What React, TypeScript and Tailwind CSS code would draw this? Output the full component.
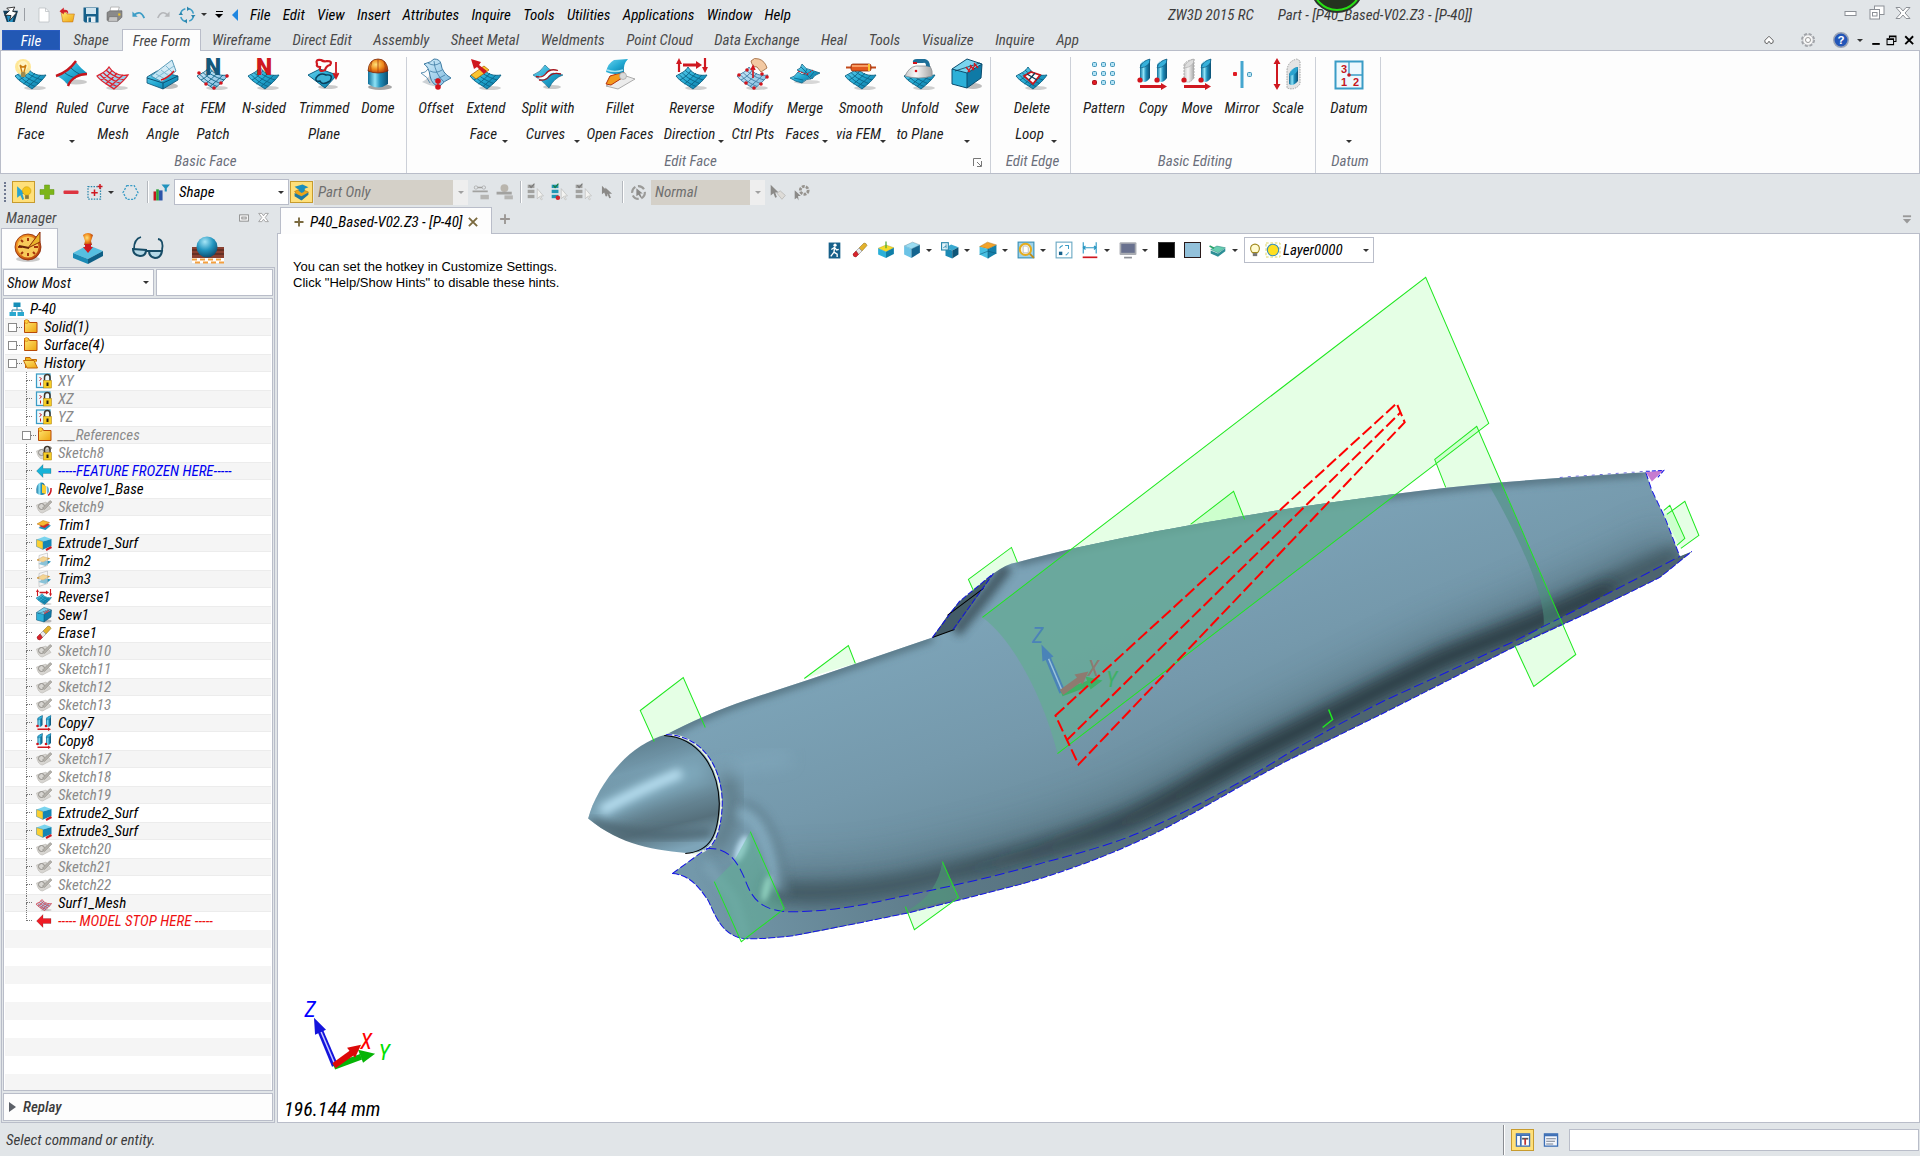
import React from 'react';
import clsx from 'clsx';

type IconProps = { className?: string };

const SURFACE = 'M0 18 C5 15 9 14 12 9 C17 17 24 18 31 17 C28 22 23 26 17 31 C12 27 4 24 0 18Z';
const SURFACE_GRID =
  'M3 16.5 C9 23 14 26 20 28.5 M6 14.5 C12 21 18 23 23.500 25.500 M9 12 C15 18 21 20 27 22 M15 12.500 C12 17 8 20 4 22 M20 15 C17 19 12 23 8.500 26 M26 17 C22 21 17 25 13 28.500';

function Svg({ size = 32, className, children }: { size?: number; className?: string; children: React.ReactNode }) {
  return (
    <svg width={size} height={size} viewBox="0 0 32 32" fill="none" className={clsx('shrink-0 overflow-visible', className)} aria-hidden="true">
      {children}
    </svg>
  );
}

function Defs() {
  return (
    <svg className="absolute h-0 w-0" aria-hidden="true">
      <defs>
        <linearGradient id="blue" x1="0" y1="0" x2="1" y2="1">
          <stop offset="0" stopColor="#6fd3ee" />
          <stop offset="0.5" stopColor="#22a9d2" />
          <stop offset="1" stopColor="#0d6f9b" />
        </linearGradient>
        <linearGradient id="pale" x1="0" y1="0" x2="1" y2="1">
          <stop offset="0" stopColor="#d4eefb" />
          <stop offset="1" stopColor="#79b7dd" />
        </linearGradient>
        <linearGradient id="tube" x1="0" y1="0" x2="1" y2="0">
          <stop offset="0" stopColor="#0d6f9b" />
          <stop offset="0.35" stopColor="#8fe3f7" />
          <stop offset="0.6" stopColor="#1f8fbb" />
          <stop offset="1" stopColor="#0b4f73" />
        </linearGradient>
        <linearGradient id="metal" x1="0" y1="0" x2="1" y2="0">
          <stop offset="0" stopColor="#c9c9c9" />
          <stop offset="0.4" stopColor="#f7f7f7" />
          <stop offset="1" stopColor="#a5a5a5" />
        </linearGradient>
        <linearGradient id="gold" x1="0" y1="0" x2="1" y2="1">
          <stop offset="0" stopColor="#ffe873" />
          <stop offset="1" stopColor="#eea410" />
        </linearGradient>
        <radialGradient id="orange" cx="0.4" cy="0.4" r="0.7">
          <stop offset="0" stopColor="#ffe27a" />
          <stop offset="0.5" stopColor="#f08a1c" />
          <stop offset="1" stopColor="#a32a0a" />
        </radialGradient>
        <radialGradient id="ball" cx="0.4" cy="0.25" r="0.8">
          <stop offset="0" stopColor="#a6e6f7" />
          <stop offset="0.5" stopColor="#2496c0" />
          <stop offset="1" stopColor="#0b4768" />
        </radialGradient>
      </defs>
    </svg>
  );
}

function Mesh({ fill = 'url(#blue)', line = '#0b6285', width = 0.9 }: { fill?: string; line?: string; width?: number }) {
  return (
    <>
      <ellipse cx="20" cy="30" rx="11" ry="2" fill="#000" opacity="0.18" />
      <path d={SURFACE} fill={fill} stroke={line} strokeWidth={width} />
      <path d={SURFACE_GRID} stroke={line} strokeWidth={width} />
    </>
  );
}

function Dots({ points }: { points: number[][] }) {
  return (
    <>
      {points.map(([x, y]) => (
        <circle key={`${x}-${y}`} cx={x} cy={y} r="1.800" fill="#d3141c" />
      ))}
    </>
  );
}

const BlendFace = () => (
  <Svg>
    <Mesh />
    <circle cx="8" cy="9" r="8" fill="#ffe690" opacity="0.95" />
    <circle cx="8" cy="8" r="5" fill="#fff3c0" />
    <path d="M5 7 L7 14 M11 7 L9 14 M5 7 Q8 11 11 7" stroke="#c97a0c" strokeWidth="1.300" />
    <rect x="6" y="14" width="4.500" height="5" rx="1" fill="#a08a4a" />
  </Svg>
);
const Ruled = () => (
  <Svg>
    <ellipse cx="20" cy="24" rx="11" ry="2.500" fill="#000" opacity="0.2" />
    <path d="M1 18 C10 15 15 10 20 4 C23 8 27 12 31 15 C24 16 16 20 12 27 C9 23 5 20 1 18Z" fill="url(#blue)" />
    <path d="M9 15 C13 18 16 19 20 20 M15 10 C19 14 23 16 26 17" stroke="#0b6285" />
    <path d="M0 18 C9 15 15 10 20 3 M31 16 C23 16 15 20 12 28" stroke="#c5161d" strokeWidth="2.400" />
  </Svg>
);
const CurveMesh = ({ size = 32 }: { size?: number }) => (
  <Svg size={size}>
    <Mesh fill="url(#pale)" line="#dc2430" width={1.3} />
  </Svg>
);
const FaceAtAngle = () => (
  <Svg>
    <ellipse cx="22" cy="28" rx="9" ry="3" fill="#000" opacity="0.25" />
    <path d="M0 19 L10 13 L31 18 L31 22 L16 31 L0 25Z" fill="url(#blue)" stroke="#0b4f73" strokeWidth="0.8" />
    <path d="M0 20 L16 25 L31 18 M16 25 V31" stroke="#0b4f73" />
    <path d="M4 18 L25 2 L29 13 L15 24Z" fill="#cfeaf6" opacity="0.9" stroke="#4a90b0" />
    <path d="M9 16 L18 21 M14 12 L22 18 M19 8 L26 15 M9 20 L27 8" stroke="#7db8d2" />
    <path d="M14 22 Q21 20 27 13" stroke="#d3141c" strokeWidth="1.500" />
  </Svg>
);
function NIcon({ color, dots }: { color: string; dots?: boolean }) {
  return (
    <Svg>
      <Mesh fill={dots ? 'url(#pale)' : 'url(#blue)'} />
      <text x="16" y="17" textAnchor="middle" fontFamily="Roboto, sans-serif" fontWeight="900" fontStyle="normal" fontSize="23" fill={color}>
        N
      </text>
      {dots && <Dots points={[[2, 15], [30, 18], [9, 26], [24, 25], [17, 30]]} />}
    </Svg>
  );
}
const TrimmedPlane = () => (
  <Svg>
    <ellipse cx="20" cy="29" rx="10" ry="2" fill="#000" opacity="0.2" />
    <path d="M0 17 L12 11 L29 17 L17 30Z" fill="url(#blue)" stroke="#0b6285" />
    <path d="M8 20 Q12 14 18 17 Q26 16 22 23 Q14 28 12 23 Q7 24 8 20Z" stroke="#083f5c" strokeWidth="1.500" fill="#3fb3d6" />
    <path d="M9 6 Q7 1 13 2 Q16 4 19 3 Q25 3 22 7 Q18 8 17 12 Q11 15 12 9 Q8 9 9 6Z" stroke="#cf1820" strokeWidth="2.200" />
    <path d="M28 4 V18 M25.500 15 L28 20 L30.500 15" stroke="#cf1820" strokeWidth="1.800" />
  </Svg>
);
const Dome = () => (
  <Svg>
    <ellipse cx="18" cy="29" rx="12" ry="3" fill="#000" opacity="0.35" />
    <path d="M6 12 V26 Q16 33 26 26 V12Z" fill="url(#tube)" />
    <path d="M6 13 Q7 1 16 1 Q25 1 26 13 Q16 17 6 13Z" fill="url(#orange)" stroke="#7b2a0a" strokeWidth="0.800" />
    <path d="M16 1 V15 M10 3 Q8 8 9 14 M22 3 Q24 8 23 14" stroke="#a33d0c" strokeWidth="0.800" />
  </Svg>
);
const OffsetIcon = () => (
  <Svg>
    <path d="M2 24 Q10 20 12 12 Q20 20 30 18 Q24 24 17 29 Q10 28 2 24Z" fill="#bfc6cb" opacity="0.8" />
    <path d="M4 6 Q12 4 14 1 Q20 1 21 6 Q22 15 31 20 Q24 23 20 28 Q12 28 10 18 Q9 9 4 6Z" fill="url(#pale)" stroke="#3d7ba3" />
    <path d="M1 15 Q6 15 8 11 M1 15 Q8 19 10 25 M8 5 Q14 9 20 5 M10 13 Q16 16 22 12 M14 22 Q20 20 25 17 M14 3 Q15 16 24 24" stroke="#3d7ba3" strokeWidth="0.800" />
    <path d="M18 23 V29" stroke="#d3141c" />
    <circle cx="18" cy="23" r="2.800" fill="#d3141c" />
    <circle cx="18" cy="29" r="2.800" fill="#d3141c" />
  </Svg>
);
const Extend = () => (
  <Svg>
    <Mesh />
    <path d="M1 17 L14 8 L19 12 L6 21Z" fill="#fbc531" stroke="#b56a08" strokeWidth="0.800" />
    <path d="M14 16 L7 9 L4 11 L1 1 L11 4 L9 7 L17 13Z" fill="#cf1820" />
  </Svg>
);
const Split = () => (
  <Svg>
    <ellipse cx="20" cy="29" rx="9" ry="2" fill="#000" opacity="0.2" />
    <path d="M1 17 Q9 14 13 7 Q20 15 31 17 Q22 20 17 30 Q10 22 1 17Z" fill="url(#blue)" stroke="#0b6285" strokeWidth="0.600" />
    <path d="M7 19 Q12 21 15 17 Q19 11 25 14" stroke="#fff" strokeWidth="3.500" />
    <path d="M4 18.500 Q11 20 14 15.500 Q18 10 26 12.500 M7 22 Q14 23 17 18.500 Q21 14 29 16" stroke="#a5161d" strokeWidth="1.300" />
  </Svg>
);
const Fillet = () => (
  <Svg>
    <path d="M2 28 L22 18 L31 21 L14 31Z" fill="#ececec" stroke="#999" strokeWidth="0.800" />
    <path d="M2 26 L6 18 L20 14 L18 20 L7 27Z" fill="#f39a1d" stroke="#b8300c" />
    <path d="M2 14 Q4 5 10 2 L24 1 Q19 6 20 14 Q11 18 2 14Z" fill="url(#blue)" />
    <path d="M3 12 Q11 15 19 12" stroke="#a7e5f5" strokeWidth="1.500" />
    <circle cx="19" cy="18" r="3.500" fill="#d9d9d9" stroke="#999" strokeWidth="0.600" />
  </Svg>
);
const Reverse = ({ size = 32 }: { size?: number }) => (
  <Svg size={size}>
    <Mesh />
    <path d="M3 14 V3 M29 0 V11" stroke="#cf1820" strokeWidth="2.200" />
    <path d="M0 6 L3 0 L6 6Z M26 9 L29 15 L32 9Z M20 3 L26 7 L20 11Z M7 5.500 H21 V8.500 H7Z" fill="#cf1820" />
  </Svg>
);
const Modify = () => (
  <Svg>
    <Mesh fill="url(#pale)" line="#3d7ba3" />
    <path d="M14 3 Q17 -1 22 1 Q28 3 30 10 L24 14 L20 9 Q15 9 14 3Z" fill="#f3c9a2" stroke="#9a6339" strokeWidth="0.800" />
    <path d="M16 20 V9 M14 12 L16 8 L18 12" stroke="#d3141c" strokeWidth="1.600" />
    <Dots points={[[2, 17], [10, 12], [30, 19], [9, 25], [24, 26], [17, 30], [25, 16]]} />
  </Svg>
);
const Merge = () => (
  <Svg>
    <ellipse cx="18" cy="24" rx="13" ry="2" fill="#000" opacity="0.15" />
    <path d="M1 20 Q6 19 9 14 Q12 17 18 17 L22 21 Q18 20 13 25 Q7 24 1 20Z" fill="url(#blue)" stroke="#0b6285" strokeWidth="0.800" />
    <path d="M8 12 Q12 11 13 6 Q17 12 22 12 L31 15 Q25 17 23 21 Q18 16 8 12Z" fill="url(#blue)" stroke="#0b6285" strokeWidth="0.800" />
    <path d="M5 20 L14 22 M12 9 L18 15 M18 11 L15 17 M25 14 L21 19" stroke="#0b6285" strokeWidth="0.800" />
    <path d="M9 13 L20 17 M18 16 L24 12" stroke="#d3141c" strokeDasharray="2 1" />
  </Svg>
);
const Smooth = () => (
  <Svg>
    <Mesh />
    <path d="M1 9.500 H31" stroke="#c2491a" strokeWidth="2" />
    <rect x="6" y="6" width="20" height="7" rx="2" fill="#e2581d" stroke="#8f2c08" strokeWidth="0.800" />
    <path d="M7 8 H25" stroke="#ffb27a" strokeWidth="1.500" />
    <path d="M24 6 V13" stroke="#fbc531" strokeWidth="2" />
  </Svg>
);
const Unfold = () => (
  <Svg>
    <Mesh />
    <path d="M1 18 Q5 9 12 8 L26 8 Q29 13 28 18 Q15 22 1 18Z" fill="url(#metal)" stroke="#8a8f94" strokeWidth="0.800" />
    <path d="M9 5 Q8 1 13 1 H21 Q26 2 26 9 L22 8 Q22 4 19 5Z" fill="#1e6f98" />
    <path d="M9 5 H13" stroke="#d3141c" strokeWidth="2" />
    <circle cx="12" cy="13" r="1.300" fill="#d3141c" />
  </Svg>
);
const Sew = ({ size = 32 }: { size?: number }) => (
  <Svg size={size}>
    <ellipse cx="22" cy="28" rx="9" ry="3" fill="#000" opacity="0.25" />
    <path d="M1 11 L16 1 L31 6 L16 15Z" fill="#7ad4ee" />
    <path d="M1 11 L16 15 V30 L1 26Z" fill="#2cb0d8" />
    <path d="M16 15 L31 6 L30 20 L16 30Z" fill="#0f7aa6" />
    <path d="M1 11 L16 15 L31 6 L16 1Z M16 15 V30 L1 26 V11 M16 30 L30 20 L31 6" stroke="#0a4c6e" strokeWidth="1" />
    <path d="M4 13 L29 5" stroke="#0a3d58" strokeWidth="0.800" />
    <path d="M15 9 L19 14 M19 7 L23 12 M23 5 L27 10 M17 14 L20 9 M21 12 L24 7" stroke="#d3141c" strokeWidth="1.300" />
  </Svg>
);
const DeleteLoop = () => (
  <Svg>
    <Mesh />
    <path d="M8 18 L15 14 L24 17 L17 26Z" fill="#fff" stroke="#c5161d" strokeWidth="1.800" />
    <path d="M11 16 L21 22 M19 15 L13 22" stroke="#0b3d58" strokeWidth="1.300" />
  </Svg>
);
const Pattern = () => (
  <Svg>
    {[4, 13, 22].flatMap((y) =>
      [4, 13, 22].map((x) => {
        const seed = x === 4 && y === 22;
        return (
          <rect key={`${x}-${y}`} x={x + 0.500} y={y + 0.500} width="4" height="4" rx="1" fill={seed ? '#e01b24' : '#b5e3f5'} stroke={seed ? '#a81018' : '#3f94b8'} />
        );
      })
    )}
  </Svg>
);
function Tube({ x, ghost }: { x: number; ghost?: boolean }) {
  return (
    <g transform={`translate(${x} 0)`}>
      <path d="M0 7 Q1 3 10 1 V20 Q5 27 0 22Z" fill={ghost ? 'url(#metal)' : 'url(#tube)'} stroke={ghost ? '#aaa' : 'none'} strokeDasharray="2 1" />
      <path d="M0 10 Q2 3 10 1 Q10 9 0 10Z" fill={ghost ? '#ddd' : '#35b0da'} stroke={ghost ? '#aaa' : '#0b4f73'} strokeWidth="0.600" />
    </g>
  );
}
function CopyMove({ size = 32, ghost }: { size?: number; ghost?: boolean }) {
  return (
    <Svg size={size}>
      <Tube x={3} ghost={ghost} />
      <Tube x={20} />
      <circle cx="3" cy="22" r="2.600" fill="#d3141c" />
      <circle cx="20" cy="22" r="2.600" fill="#d3141c" />
      <path d="M3 27 H24 V25 L30 28.500 L24 32 V30 H3Z" fill="#cf1820" />
    </Svg>
  );
}
const Mirror = () => (
  <Svg>
    <rect x="14.500" y="3" width="3" height="27" fill="#45a6cf" />
    <rect x="7" y="14" width="4" height="4" rx="1" fill="#e01b24" />
    <rect x="21.500" y="14.500" width="4" height="4" rx="1" fill="#b5e3f5" stroke="#3f94b8" />
  </Svg>
);
const Scale = () => (
  <Svg>
    <path d="M15 12 Q16 3 25 1 L28 3 V26 Q23 33 15 30Z" fill="#e4e4e4" stroke="#a0a0a0" strokeDasharray="1.500 1" />
    <path d="M17 16 Q19 10 26 9 V23 Q21 29 17 26Z" fill="url(#tube)" />
    <path d="M17 18 Q19 10 26 9 Q26 17 17 18Z" fill="#2aa3cf" />
    <path d="M5 5 V27" stroke="#cf1820" strokeWidth="2" />
    <path d="M1.500 6 L5 0 L8.500 6Z M1.500 26 L5 32 L8.500 26Z" fill="#cf1820" />
  </Svg>
);
const Datum = ({ size = 32 }: { size?: number }) => (
  <Svg size={size}>
    <rect x="2.500" y="3.500" width="27" height="27" fill="#eef8fd" stroke="#3a9cc6" strokeWidth="2" />
    <path d="M16 4 V17 H30" stroke="#3a9cc6" strokeWidth="1.300" />
    <circle cx="16" cy="17" r="1.800" fill="#c5161d" />
    <g fontFamily="Liberation Sans, sans-serif" fontWeight="700" fontStyle="normal" fontSize="11" fill="#c5161d" textAnchor="middle">
      <text x="11" y="15">3</text>
      <text x="11" y="28">1</text>
      <text x="23" y="28">2</text>
    </g>
  </Svg>
);

function Cube({ size = 18, top = '#7ad4ee', left = '#2cb0d8', right = '#0f6f99' }: { size?: number; top?: string; left?: string; right?: string }) {
  return (
    <Svg size={size}>
      <path d="M2 9 L17 2 L30 7 L15 14Z" fill={top} stroke="#3a6d82" strokeWidth="0.600" />
      <path d="M2 9 L15 14 V30 L2 24Z" fill={left} />
      <path d="M15 14 L30 7 V21 L15 30Z" fill={right} />
    </Svg>
  );
}

const Eraser = ({ size = 16 }: { size?: number }) => (
  <Svg size={size}>
    <path d="M14 12 L24 2 Q29 2 30 7 L20 18Z" fill="#e3b22c" stroke="#8c6a12" />
    <path d="M8 18 L14 12 L20 18 L13 25Z" fill="#e9e9e9" stroke="#777" />
    <path d="M2 24 L8 18 L13 25 L8 30 Q2 30 2 24Z" fill="#d8232b" stroke="#8c1016" />
  </Svg>
);
const Folder = ({ open }: { open?: boolean }) => (
  <Svg size={16}>
    {open ? (
      <>
        <path d="M5 26 V5 H14 L17 9 H27 V13" fill="#f0b51c" stroke="#c2680a" strokeWidth="2" />
        <path d="M1 11 H22 L29 26 H8Z" fill="url(#gold)" stroke="#c2680a" strokeWidth="2" />
      </>
    ) : (
      <>
        <path d="M3 27 V3 H11 L13 7 H28 V27Z" fill="url(#gold)" stroke="#b84a08" strokeWidth="2" />
        <circle cx="7" cy="5" r="4" fill="#ffce3a" stroke="#c2680a" />
      </>
    )}
  </Svg>
);
const Lock = () => (
  <>
    <path d="M17 15 V9 Q17 3 22.500 3 Q28 3 28 9 V15" stroke="#3d352c" strokeWidth="3" />
    <rect x="15" y="15" width="16" height="15" fill="#f6cd25" stroke="#a8790b" />
    <path d="M23 19 V26" stroke="#2b2110" strokeWidth="4" />
  </>
);
const DatumLock = () => (
  <Svg size={16}>
    <rect x="1" y="2" width="27" height="27" fill="#eef8fd" stroke="#3a9cc6" strokeWidth="2.500" />
    <path d="M7 8 L11 12 L7 15 M9 19 V25" stroke="#c5161d" strokeWidth="2" />
    <Lock />
  </Svg>
);
const SketchIcon = ({ locked }: { locked?: boolean }) => (
  <Svg size={16}>
    <path d="M1 12 L20 6 L30 19 L13 28Q4 28 1 12Z" fill="#d7d5d1" stroke="#b1aea8" />
    <circle cx="11" cy="15" r="6" stroke="#8f8c87" strokeWidth="2" />
    <path d="M13 18 L28 3 L32 6 L17 21Z" fill="#b3b0aa" stroke="#8f8c87" />
    {locked && <Lock />}
  </Svg>
);
const ArrowLeft = ({ color }: { color: string }) => (
  <Svg size={16}>
    <path d="M1 16 L14 3 V11 H30 V21 H14 V29Z" fill={color} stroke="#00000055" />
  </Svg>
);
const RootIcon = () => (
  <Svg size={16}>
    <path d="M16 10 V18 M6 24 V18 H26 V24" stroke="#2b7c9e" strokeWidth="2" />
    <rect x="9" y="3" width="14" height="9" fill="#178fb8" />
    <rect x="1" y="22" width="13" height="8" fill="#2aa8cf" />
    <rect x="17" y="22" width="13" height="8" fill="#2aa8cf" />
  </Svg>
);
const Revolve = () => (
  <Svg size={16}>
    <path d="M1 24 Q-1 6 9 3 Q18 2 18 12 V26 Q8 31 1 24Z" fill="url(#tube)" />
    <path d="M12 6 L20 10 V26 L12 24Z" fill="#fbd033" />
    <path d="M21 10 Q27 12 26 22 L22 27Z" fill="#6fb3d2" />
    <path d="M30 14 Q31 24 24 29" stroke="#cf1820" strokeWidth="3" />
  </Svg>
);
const Trim = ({ pale }: { pale?: boolean }) => (
  <Svg size={16}>
    <path d="M5 22 L16 14 L30 17 L19 26Z" fill="#2193bd" />
    {!pale && <path d="M6 18 L18 12 L28 14 L17 22Z" fill="#d3242b" />}
    <path d="M2 14 L14 7 L27 11 L14 18Z" fill="#f7b932" stroke="#b56a08" />
    {pale && <path d="M6 5 L23 0 V25 L6 31Z" fill="#f4f4f4" fillOpacity="0.5" stroke="#a8a8a8" />}
  </Svg>
);
const ExtrudeIcon = () => (
  <Svg size={16}>
    <path d="M1 9 L17 3 L31 8 L14 13Z" fill="#7ad4ee" />
    <path d="M1 9 L14 13 V29 L1 23Z" fill="#fbd033" stroke="#3a7d98" />
    <path d="M14 13 L31 8 V22 L14 29Z" fill="#1485b3" />
    <path d="M20 30 L31 24" stroke="#cf1820" strokeWidth="4" />
  </Svg>
);

function Caret({ className }: IconProps) {
  return <span className={clsx('inline-block shrink-0 border-x-[3px] border-t-[3px] border-x-transparent border-t-[#333]', className)} />;
}

const MENUS = ['File', 'Edit', 'View', 'Insert', 'Attributes', 'Inquire', 'Tools', 'Utilities', 'Applications', 'Window', 'Help'];

const TABS = [
  'Wireframe', 'Direct Edit', 'Assembly', 'Sheet Metal', 'Weldments', 'Point Cloud', 'Data Exchange',
  'Heal', 'Tools', 'Visualize', 'Inquire', 'App',
];

type Command = { lines: string[]; icon: React.ReactNode; width: string; menu?: boolean };
type Group = { name: string; width: string; pad: string; launcher?: boolean; commands: Command[] };

const GROUPS: Group[] = [
  {
    name: 'Basic Face',
    width: 'w-[406px]',
    pad: 'pl-2',
    commands: [
      { lines: ['Blend', 'Face'], icon: <BlendFace />, width: 'w-11' },
      { lines: ['Ruled'], icon: <Ruled />, width: 'w-[38px]', menu: true },
      { lines: ['Curve', 'Mesh'], icon: <CurveMesh />, width: 'w-11' },
      { lines: ['Face at', 'Angle'], icon: <FaceAtAngle />, width: 'w-14' },
      { lines: ['FEM', 'Patch'], icon: <NIcon color="#14587a" dots />, width: 'w-11' },
      { lines: ['N-sided'], icon: <NIcon color="#cf1820" />, width: 'w-[58px]' },
      { lines: ['Trimmed', 'Plane'], icon: <TrimmedPlane />, width: 'w-[62px]' },
      { lines: ['Dome'], icon: <Dome />, width: 'w-[46px]' },
    ],
  },
  {
    name: 'Edit Face',
    width: 'w-[584px]',
    pad: 'pl-[5px]',
    launcher: true,
    commands: [
      { lines: ['Offset'], icon: <OffsetIcon />, width: 'w-12' },
      { lines: ['Extend', 'Face'], icon: <Extend />, width: 'w-[52px]', menu: true },
      { lines: ['Split with', 'Curves'], icon: <Split />, width: 'w-[72px]', menu: true },
      { lines: ['Fillet', 'Open Faces'], icon: <Fillet />, width: 'w-[72px]' },
      { lines: ['Reverse', 'Direction'], icon: <Reverse />, width: 'w-[72px]', menu: true },
      { lines: ['Modify', 'Ctrl Pts'], icon: <Modify />, width: 'w-[50px]' },
      { lines: ['Merge', 'Faces'], icon: <Merge />, width: 'w-[54px]', menu: true },
      { lines: ['Smooth', 'via FEM'], icon: <Smooth />, width: 'w-[58px]', menu: true },
      { lines: ['Unfold', 'to Plane'], icon: <Unfold />, width: 'w-[60px]' },
      { lines: ['Sew'], icon: <Sew />, width: 'w-[34px]', menu: true },
    ],
  },
  {
    name: 'Edit Edge',
    width: 'w-20',
    pad: 'pl-3',
    commands: [{ lines: ['Delete', 'Loop'], icon: <DeleteLoop />, width: 'w-[58px]', menu: true }],
  },
  {
    name: 'Basic Editing',
    width: 'w-[245px]',
    pad: 'pl-[6px]',
    commands: [
      { lines: ['Pattern'], icon: <Pattern />, width: 'w-[54px]' },
      { lines: ['Copy'], icon: <CopyMove />, width: 'w-11' },
      { lines: ['Move'], icon: <CopyMove ghost />, width: 'w-11' },
      { lines: ['Mirror'], icon: <Mirror />, width: 'w-[46px]' },
      { lines: ['Scale'], icon: <Scale />, width: 'w-[46px]' },
    ],
  },
  {
    name: 'Datum',
    width: 'w-[65px]',
    pad: 'pl-2',
    commands: [{ lines: ['Datum'], icon: <Datum />, width: 'w-[50px]', menu: true }],
  },
];

function QuickAccess() {
  return (
    <div className="flex items-center pl-[2px]">
      <Svg size={17}>
        <path d="M2 9 L30 9 L24 30 H9Z" fill="#123f5c" />
        <path d="M8 14 L24 10 L20 30 H12Z" fill="#2793c4" />
        <path d="M9 4 L24 2 L20 10 L28 12 L14 28 L17 18 L5 17 L14 9Z" fill="#fff" stroke="#111" strokeWidth="1.500" />
      </Svg>
      <span className="ml-[5px] h-[13px] w-px bg-[#9a9ea4]" />
      <button type="button" aria-label="New" className="ml-[10px] grid w-[17px] place-items-center">
        <Svg size={16}>
          <path d="M6 2 H19 L26 9 V30 H6Z" fill="#fff" stroke="#b9bdc2" strokeWidth="1.500" />
          <path d="M19 2 V9 H26" stroke="#b9bdc2" strokeWidth="1.500" />
        </Svg>
      </button>
      <button type="button" aria-label="Open" className="ml-[7px] grid w-[17px] place-items-center">
        <Svg size={17}>
          <path d="M4 12 H13 L15 15 H29 L26 30 H7Z" fill="url(#gold)" stroke="#c2680a" />
          <path d="M1 10 L9 3 V7 Q19 6 17 15 Q15 10 9 12 V16Z" fill="#d3242b" />
        </Svg>
      </button>
      <button type="button" aria-label="Save" className="ml-[6px] grid w-[17px] place-items-center">
        <Svg size={16}>
          <path d="M1 1 H31 V31 H4 L1 28Z" fill="#17608a" />
          <rect x="6" y="2" width="20" height="12" fill="#cfe3ee" />
          <rect x="8" y="19" width="17" height="12" fill="#e7f0f5" />
          <rect x="11" y="21" width="5" height="9" fill="#17608a" />
        </Svg>
      </button>
      <button type="button" aria-label="Print" className="ml-[7px] grid w-[17px] place-items-center">
        <Svg size={17}>
          <path d="M9 2 L25 2 L22 12 H7Z" fill="#fff" stroke="#888" />
          <path d="M2 12 L8 9 H30 V21 L24 27 H2Z" fill="#8a8a8a" stroke="#555" />
          <path d="M6 20 H22 V29 H4Z" fill="#c4c4c4" stroke="#666" />
          <rect x="23" y="14" width="4" height="4" fill="#f0c423" />
        </Svg>
      </button>
      <button type="button" aria-label="Undo" className="ml-[7px] grid w-[17px] place-items-center">
        <Svg size={14}>
          <path d="M6 15 Q20 4 28 23" stroke="#3d9dc6" strokeWidth="4" />
          <path d="M1 8 V20 H13Z" fill="#3d9dc6" />
        </Svg>
      </button>
      <button type="button" aria-label="Redo" className="ml-[7px] grid w-[17px] place-items-center">
        <Svg size={14}>
          <path d="M26 15 Q12 4 4 23" stroke="#b4b6b9" strokeWidth="3.500" />
          <path d="M31 8 V20 H19Z" fill="#b4b6b9" />
        </Svg>
      </button>
      <button type="button" aria-label="Regenerate" className="ml-[7px] grid w-[18px] place-items-center">
        <Svg size={16}>
          <circle cx="16" cy="16" r="13" stroke="#3d9dc6" strokeWidth="3" strokeDasharray="15.400 5" />
          <path d="M16 -1 L22 4 L16 8Z M33 16 L28 22 L24 16Z M16 33 L10 28 L16 24Z M-1 16 L4 10 L8 16Z" fill="#2d86ad" />
        </Svg>
      </button>
      <Caret className="ml-[5px]" />
      <span className="ml-2 flex flex-col items-center gap-[2px]">
        <span className="h-px w-[7px] bg-black" />
        <span className="border-x-[4px] border-t-[4px] border-x-transparent border-t-black" />
      </span>
      <span className="ml-[9px] border-y-[6px] border-r-[6px] border-y-transparent border-r-[#1f86e0]" />
    </div>
  );
}

function WindowButtons() {
  return (
    <div className="flex items-center gap-[10px] pr-[9px] pb-1 text-[#8c9096]">
      <button type="button" aria-label="Minimize"><Svg size={16}><rect x="4" y="13" width="22" height="8" fill="#fff" stroke="currentColor" strokeWidth="2" /></Svg></button>
      <button type="button" aria-label="Restore">
        <Svg size={16}>
          <rect x="11" y="2" width="19" height="17" fill="#fff" stroke="currentColor" strokeWidth="2" />
          <rect x="2" y="9" width="19" height="19" fill="#fff" stroke="currentColor" strokeWidth="2" />
          <rect x="7" y="15" width="9" height="7" stroke="currentColor" strokeWidth="2" />
        </Svg>
      </button>
      <button type="button" aria-label="Close">
        <Svg size={16}>
          <path d="M2 5 H10 L16 12 L22 5 H30 L20 16 L30 27 H22 L16 20 L10 27 H2 L12 16Z" fill="#fff" stroke="currentColor" strokeWidth="2" />
        </Svg>
      </button>
    </div>
  );
}

function TitleBar() {
  return (
    <header className="relative flex h-[29px] items-center overflow-hidden">
      <QuickAccess />
      <nav className="ml-[6px] flex w-[553px] justify-between text-black">
        {MENUS.map((m) => (
          <button type="button" key={m} className="px-[6px] italic">{m}</button>
        ))}
      </nav>
      <div className="flex flex-1 justify-center gap-6 text-[#3c3c3c]">
        <span>ZW3D 2015 RC</span>
        <span>Part - [P40_Based-V02.Z3 - [P-40]]</span>
      </div>
      <WindowButtons />
      <svg className="absolute top-0 right-[556px]" width="54" height="15" viewBox="0 0 54 15" aria-hidden="true">
        <circle cx="27" cy="-14" r="27" fill="#2d332d" />
        <circle cx="27" cy="-14" r="24" fill="#24321f" stroke="#27df14" strokeWidth="2" />
      </svg>
    </header>
  );
}

function RibbonTabs() {
  return (
    <div className="relative z-10 -mb-px flex h-[22px] items-stretch pl-[2px] text-[#4a4a4a]">
      <button type="button" className="mt-px mb-px w-[58px] border border-[#2a5cc0] bg-[#2258b4] italic text-white">File</button>
      <button type="button" className="w-[62px] italic">Shape</button>
      <button type="button" className="w-[79px] border border-b-0 border-[#b9bdc9] bg-[#fdfdfd] italic">Free Form</button>
      <nav className="flex w-[888px] justify-between pl-px">
        {TABS.map((t) => (
          <button type="button" key={t} className="px-[10px] italic">{t}</button>
        ))}
      </nav>
      <div className="ml-auto flex items-center pr-[5px]">
        <button type="button" aria-label="Collapse ribbon">
          <Svg size={10}><path d="M3 17 L16 4 L29 17 V24 L22 28 L16 20 L10 28 L3 24Z" fill="#fff" stroke="#555" strokeWidth="3" /></Svg>
        </button>
        <button type="button" aria-label="Options" className="ml-[26px]">
          <Svg size={16}>
            <circle cx="16" cy="16" r="12" fill="#f2f2f2" stroke="#a0a3a8" strokeWidth="4" strokeDasharray="6 3.400" />
            <circle cx="16" cy="16" r="10.500" fill="#f6f6f6" stroke="#a8abb0" strokeWidth="1.500" />
            <circle cx="16" cy="16" r="5" fill="#fff" stroke="#999" strokeWidth="2" />
          </Svg>
        </button>
        <button type="button" aria-label="Help" className="ml-[17px]">
          <Svg size={16}>
            <circle cx="16" cy="16" r="14.500" fill="#2356b8" stroke="#9aa3b5" strokeWidth="3" />
            <text x="16" y="24" textAnchor="middle" fontFamily="Liberation Sans, sans-serif" fontStyle="normal" fontWeight="700" fontSize="23" fill="#fff">?</text>
          </Svg>
        </button>
        <Caret className="ml-2" />
        <button type="button" aria-label="Minimize document" className="ml-[7px]">
          <Svg size={12}><rect x="6" y="24" width="20" height="5" fill="#000" /></Svg>
        </button>
        <button type="button" aria-label="Restore document" className="ml-1">
          <Svg size={11}><path d="M10 9 V3 H29 V19 H22 M3 11 H22 V28 H3Z M3 13 H22 M10 5 H29" stroke="#000" strokeWidth="3" /></Svg>
        </button>
        <button type="button" aria-label="Close document" className="ml-[6px]">
          <Svg size={12}><path d="M6 6 L27 27 M27 6 L6 27" stroke="#000" strokeWidth="5" /></Svg>
        </button>
      </div>
    </div>
  );
}

function RibbonCommand({ lines, icon, width, menu }: Command) {
  return (
    <button type="button" className={clsx('relative flex shrink-0 flex-col items-center italic', width)}>
      {icon}
      <span className="mt-[5px] leading-[26px] whitespace-nowrap">{lines[0]}</span>
      {lines[1] && <span className={clsx('leading-[26px] whitespace-nowrap', menu && 'pr-[5px]')}>{lines[1]}</span>}
      {menu && <Caret className={clsx('absolute top-[82px]', lines[1] ? 'right-1' : 'self-center')} />}
    </button>
  );
}

function Ribbon() {
  return (
    <div className="flex h-[124px] border border-[#b9bdc9] bg-[#fdfdfd] text-[#1c1c1c]">
      {GROUPS.map((g) => (
        <section key={g.name} aria-label={g.name} className={clsx('relative mt-[6px] flex shrink-0 flex-col border-r border-[#ccd0d8]', g.width)}>
          <div className={clsx('flex h-[92px] items-start pt-px', g.pad)}>
            {g.commands.map((c) => (
              <RibbonCommand key={c.lines.join(' ')} {...c} />
            ))}
          </div>
          <h2 className={clsx('text-center leading-6 text-[#6b6f7b]', g.launcher ? 'pr-4' : 'pl-1')}>{g.name}</h2>
          {g.launcher && (
            <svg className="absolute right-2 bottom-[6px]" width="9" height="9" viewBox="0 0 9 9" aria-hidden="true">
              <path d="M0.500 8 V0.500 H8 M4 4 L8 8 M8.500 3 V8.500 H4" stroke="#777" fill="none" />
            </svg>
          )}
        </section>
      ))}
    </div>
  );
}

function Separator({ className }: IconProps) {
  return <span className={clsx('h-[22px] w-[2px] border-l border-[#b4b8be] bg-white', className)} />;
}

function ListCursor({ color = '#a2a2a0', active }: { color?: string; active?: boolean }) {
  return (
    <Svg size={18}>
      {[3, 12, 21].map((y) => (
        <rect key={y} x="3" y={y} width="12" height="6" fill={active ? '#2197b5' : color} />
      ))}
      <path d="M6 4 L9 8 L15 1" stroke={active ? '#157a34' : '#777'} strokeWidth="2" />
      {active && <circle cx="14" cy="26" r="4" fill="#d3242b" />}
      <path d="M20 10 V28 L24 24 L27 30 L29 29 L26 23 H31Z" fill="#f3f3f1" stroke="#b3b3b0" />
    </Svg>
  );
}

function SelectionBar() {
  return (
    <div className="flex h-[33px] items-center pt-[3px]">
      <span className="ml-1 h-5 border-l-2 border-dotted border-[#6e7890]" />
      <button type="button" aria-label="Pick filter" className="ml-[6px] grid h-[22px] w-[23px] place-items-center border border-[#c79b2e] bg-[#ffe07a]">
        <Svg size={17}>
          <path d="M4 4 V26 L10 21 L14 30 L17 28 L14 19 H20Z" fill="#29a3cf" />
          <circle cx="22" cy="13" r="8" fill="#f5c51a" stroke="#c99a10" />
          <rect x="19" y="21" width="7" height="7" fill="#8a7a3c" />
        </Svg>
      </button>
      <button type="button" aria-label="Add to selection" className="ml-1">
        <Svg size={16}><path d="M11 2 H21 V11 H30 V21 H21 V30 H11 V21 H2 V11 H11Z" fill="#7cb518" stroke="#5c9210" /></Svg>
      </button>
      <button type="button" aria-label="Remove from selection" className="ml-2">
        <Svg size={16}><rect x="1" y="13" width="30" height="7" rx="2" fill="#dd3540" /></Svg>
      </button>
      <button type="button" aria-label="Pick all" className="ml-2">
        <Svg size={16}>
          <rect x="2" y="5" width="25" height="25" stroke="#2b87ab" strokeWidth="2.500" strokeDasharray="3 2.500" />
          <path d="M15 11 V24 M8.500 17.500 H21.500 M26 0 V10 M21 5 H31" stroke="#cf1820" strokeWidth="3" />
        </Svg>
      </button>
      <Caret className="ml-[5px]" />
      <button type="button" aria-label="Polygon pick" className="ml-2">
        <Svg size={17}><path d="M9 3 H23 L30 16 L23 29 H9 L2 16Z" stroke="#3a9cc6" strokeWidth="2.500" strokeDasharray="4 2.500" /></Svg>
      </button>
      <Separator className="ml-2" />
      <span className="ml-1">
        <Svg size={17}>
          <path d="M1 14 H6 V31 H1Z" fill="#c5161d" /><path d="M6 10 H11 V31 H6Z" fill="#2aa33a" /><path d="M11 12 H18 V31 H11Z" fill="#2c54a8" />
          <path d="M16 1 H32 L26 8 V14 H22 V8Z" fill="#2193bd" />
        </Svg>
      </span>
      <div className="relative ml-1 flex items-center">
        <select aria-label="Entity type" className="h-[26px] w-[115px] appearance-none border border-[#b9bdc9] bg-white pl-1 text-black italic"><option>Shape</option></select>
        <Caret className="pointer-events-none absolute right-[5px]" />
      </div>
      <button type="button" aria-label="Part scope" className="ml-px grid h-[22px] w-[23px] place-items-center border border-[#c79b2e] bg-[#ffe07a]">
        <Svg size={17}>
          <path d="M3 14 L14 9 L29 15 L16 30Z" fill="#eaa51a" stroke="#a86a08" />
          <path d="M3 5 L18 1 L29 6 L22 9 Q24 14 16 17 L10 12 Q13 9 8 9Z" fill="#1d8fbd" />
          <path d="M3 17 L16 23 L29 16 V20 L16 31 L3 23Z" fill="#1d7aa3" />
        </Svg>
      </button>
      <div className="relative ml-px flex items-center">
        <select aria-label="Scope" disabled className="h-[25px] w-[154px] appearance-none border-r-[15px] border-[#eeeeee] bg-[#d4d0c8] pl-1 text-[#6f6f6f] italic opacity-100"><option>Part Only</option></select>
        <Caret className="pointer-events-none absolute right-1 border-t-[#a0a0a0]" />
      </div>
      <Svg size={18} className="ml-1">
        <path d="M1 15 H28 M4 8 H24" stroke="#a2a2a0" strokeWidth="3" /><circle cx="7" cy="8" r="3" fill="#e1e5e8" stroke="#999" /><circle cx="21" cy="8" r="3" fill="#e1e5e8" stroke="#999" />
        <rect x="15" y="21" width="15" height="8" fill="#b5b5b3" />
      </Svg>
      <Svg size={18} className="ml-[6px]">
        <circle cx="15" cy="9" r="7" fill="#b9b5ad" /><path d="M1 18 H28" stroke="#a2a2a0" strokeWidth="5" /><rect x="15" y="22" width="15" height="7" fill="#b5b5b3" />
      </Svg>
      <Separator className="ml-[6px]" />
      <div className="ml-1 flex items-center gap-[6px]">
        <ListCursor />
        <ListCursor active />
        <ListCursor />
        <Svg size={18}><path d="M7 5 V20 L11 17 L14 24 L17 23 L14 16 H18Z M13 8 V23 L17 20 L20 27 L23 26 L20 19 H25Z" fill="#8b8a88" /></Svg>
      </div>
      <Separator className="ml-[6px]" />
      <Svg size={17} className="ml-[6px]">
        <circle cx="16" cy="16" r="12" stroke="#9b9b99" strokeWidth="4" strokeDasharray="13 5" /><path d="M12 8 V23 L16 20 L20 26 L22 25 L19 18 H24Z" fill="#8b8a88" />
      </Svg>
      <div className="relative ml-1 flex items-center">
        <select aria-label="Pick mode" disabled className="h-[25px] w-[114px] appearance-none border-r-[15px] border-[#eeeeee] bg-[#d4d0c8] pl-1 text-[#6f6f6f] italic opacity-100"><option>Normal</option></select>
        <Caret className="pointer-events-none absolute right-1 border-t-[#a0a0a0]" />
      </div>
      <Svg size={18} className="ml-1">
        <path d="M3 3 V22 L8 18 L11 26 L14 25 L11 17 H17Z" fill="#8b8a88" /><path d="M14 18 L20 14 L29 22 L23 29Z" fill="#dedcd8" stroke="#a8a6a2" />
      </Svg>
      <Svg size={18} className="ml-[6px]">
        <circle cx="20" cy="13" r="7" stroke="#96938e" strokeWidth="5" strokeDasharray="5 2" /><path d="M3 13 V29 L7 26 L10 31 L9 23 H14Z" fill="#8b8a88" />
      </Svg>
    </div>
  );
}

type Node = { label: string; icon: React.ReactNode; kind?: 'root' | 'top' | 'branch'; tone?: string };

const sketch = (n: number): Node => ({ label: `Sketch${n}`, icon: <SketchIcon />, tone: 'text-[#8a8a8a]' });

const TREE: Node[] = [
  { label: 'P-40', icon: <RootIcon />, kind: 'root' },
  { label: 'Solid(1)', icon: <Folder />, kind: 'top' },
  { label: 'Surface(4)', icon: <Folder />, kind: 'top' },
  { label: 'History', icon: <Folder open />, kind: 'top' },
  { label: 'XY', icon: <DatumLock />, tone: 'text-[#8a8a8a]' },
  { label: 'XZ', icon: <DatumLock />, tone: 'text-[#8a8a8a]' },
  { label: 'YZ', icon: <DatumLock />, tone: 'text-[#8a8a8a]' },
  { label: '___References', icon: <Folder />, kind: 'branch', tone: 'text-[#8a8a8a]' },
  { label: 'Sketch8', icon: <SketchIcon locked />, tone: 'text-[#8a8a8a]' },
  { label: '-----FEATURE FROZEN HERE-----', icon: <ArrowLeft color="#17b3d8" />, tone: 'text-[#0000f0]' },
  { label: 'Revolve1_Base', icon: <Revolve /> },
  sketch(9),
  { label: 'Trim1', icon: <Trim /> },
  { label: 'Extrude1_Surf', icon: <ExtrudeIcon /> },
  { label: 'Trim2', icon: <Trim pale /> },
  { label: 'Trim3', icon: <Trim pale /> },
  { label: 'Reverse1', icon: <Reverse size={16} /> },
  { label: 'Sew1', icon: <Sew size={16} /> },
  { label: 'Erase1', icon: <Eraser /> },
  sketch(10), sketch(11), sketch(12), sketch(13),
  { label: 'Copy7', icon: <CopyMove size={16} /> },
  { label: 'Copy8', icon: <CopyMove size={16} /> },
  sketch(17), sketch(18), sketch(19),
  { label: 'Extrude2_Surf', icon: <ExtrudeIcon /> },
  { label: 'Extrude3_Surf', icon: <ExtrudeIcon /> },
  sketch(20), sketch(21), sketch(22),
  { label: 'Surf1_Mesh', icon: <CurveMesh size={16} /> },
  { label: '----- MODEL STOP HERE -----', icon: <ArrowLeft color="#ee1c25" />, tone: 'text-[#ee1111]' },
];

function TreeRow({ node, last }: { node: Node; last: boolean }) {
  const { kind, label, icon, tone } = node;
  return (
    <li className={clsx('flex h-[18px] items-center even:border-y even:border-[#ececec] even:bg-[#f5f5f5]', tone ?? 'text-black')}>
      {kind === 'root' && <span className="w-1" />}
      {kind === 'top' && (
        <span className="flex h-full w-[18px] items-center pl-[3px]">
          <span className="h-[9px] w-[9px] border border-[#8a8a8a] bg-white" />
          <span className="w-[5px] border-t border-dotted border-[#777]" />
        </span>
      )}
      {kind === 'branch' && (
        <span className="flex w-[32px] items-center pl-[17px]">
          <span className="h-[9px] w-[9px] border border-[#8a8a8a] bg-white" />
          <span className="w-[5px] border-t border-dotted border-[#777]" />
        </span>
      )}
      {!kind && (
        <span className="flex h-full w-[31px] flex-col pl-[21px]">
          <span className="h-[9px] w-[6px] border-b border-l border-dotted border-[#777]" />
          {!last && <span className="h-[9px] w-[6px] border-l border-dotted border-[#777]" />}
        </span>
      )}
      {icon}
      <span className={clsx('leading-[18px] whitespace-nowrap', kind ? 'ml-[5px]' : 'ml-[6px]')}>{label}</span>
    </li>
  );
}

function Manager() {
  return (
    <aside className="flex w-[277px] shrink-0 flex-col">
      <div className="flex h-[21px] items-center pr-2 pl-[6px] text-[#4a4a4a]">
        <h1>Manager</h1>
        <button type="button" aria-label="Float panel" className="ml-auto">
          <Svg size={10}><rect x="2" y="6" width="28" height="20" fill="#fff" stroke="#888" strokeWidth="3" /><rect x="9" y="13" width="14" height="6" stroke="#888" strokeWidth="3" /></Svg>
        </button>
        <button type="button" aria-label="Close panel" className="ml-[9px]">
          <Svg size={11}><path d="M2 4 H11 L16 11 L21 4 H30 L21 16 L30 28 H21 L16 21 L11 28 H2 L11 16Z" fill="#fff" stroke="#888" strokeWidth="2" /></Svg>
        </button>
      </div>
      <div className="relative z-10 -mb-px flex h-10 pl-px">
        <button type="button" aria-label="History" className="grid w-[57px] place-items-center border border-b-0 border-[#b9bdc9] bg-[#fdfdfd] pr-1 pb-1">
          <Svg>
            <ellipse cx="16" cy="28" rx="12" ry="3" fill="#000" opacity="0.2" />
            <circle cx="16" cy="16" r="13" fill="url(#orange)" stroke="#8c2a06" strokeWidth="0.800" />
            <circle cx="16" cy="16" r="10.500" fill="#f8c95a" />
            <path d="M16 7 V10 M16 22 V25 M6 16 H10 M22 16 H26 M9 9 L11 11 M9 23 L11 21 M23 23 L21 21" stroke="#a3330a" strokeWidth="2" />
            <path d="M16 17 L28 1 L28 11Z" fill="#e8b42a" stroke="#8c2a06" />
            <path d="M7 15 L17 17" stroke="#6a2408" strokeWidth="2" />
          </Svg>
        </button>
        <button type="button" aria-label="Assembly" className="grid w-[60px] place-items-center">
          <Svg>
            <path d="M1 21 L16 13 L31 19 L16 27Z" fill="#56bfe0" /><path d="M1 21 L16 27 V32 L1 26Z" fill="#1b8ab5" /><path d="M16 27 L31 19 V24 L16 32Z" fill="#0e5f85" />
            <path d="M11 3 Q16 -1 21 3 L19 9 L20 13 H12 L13 9Z" fill="url(#orange)" />
            <path d="M13 12 H19 V15 H21 L16 21 L11 15 H13Z" fill="#cf1820" />
          </Svg>
        </button>
        <button type="button" aria-label="Views" className="grid w-[60px] place-items-center">
          <Svg>
            <path d="M2 17 Q2 7 9 5 M30 18 Q32 8 26 7" stroke="#174c66" strokeWidth="1.800" />
            <path d="M1 17 L14 18 Q14 24 8 24 Q1 23 1 17Z M17 19 L30 19 Q29 26 23 26 Q17 25 17 19Z" fill="#b5d8e6" stroke="#174c66" strokeWidth="2" />
            <path d="M14 19 H17" stroke="#174c66" strokeWidth="2" />
          </Svg>
        </button>
        <button type="button" aria-label="Visuals" className="grid w-[60px] place-items-center">
          <Svg>
            <rect x="0" y="15" width="32" height="11" fill="#8a4030" />
            <path d="M0 18 H32 M0 22 H32" stroke="#442018" />
            <path d="M0 28.500 H32" stroke="#fff" strokeWidth="5" /><path d="M0 27.500 H32 M3 30.500 H32" stroke="#f3a040" strokeWidth="2" strokeDasharray="5 3" />
            <circle cx="15" cy="15" r="10.500" fill="url(#ball)" />
          </Svg>
        </button>
      </div>
      <div className="mr-[2px] ml-px flex min-h-0 flex-1 flex-col gap-[2px] border border-[#b9bdc9] p-px">
        <div className="flex gap-[2px]">
          <div className="relative flex items-center">
            <select aria-label="Display filter" className="h-[27px] w-[151px] appearance-none border border-[#b9bdc9] bg-[#fdfdfd] pl-[3px] text-[#111] italic"><option>Show Most</option></select>
            <Caret className="pointer-events-none absolute right-[5px]" />
          </div>
          <input aria-label="Search history" className="h-[27px] min-w-0 flex-1 border border-[#b9bdc9] bg-white px-1" />
        </div>
        <div className="min-h-0 flex-1 overflow-hidden border border-[#b9bdc9] bg-white px-px pt-px">
          <ul>
            {TREE.map((node, i) => (
              <TreeRow key={node.label} node={node} last={i === TREE.length - 1} />
            ))}
            {Array.from({ length: 9 }, (_, i) => (
              <li key={i} className="h-[18px] even:bg-[#f5f5f5]" />
            ))}
          </ul>
        </div>
        <button type="button" className="flex h-7 shrink-0 items-center border border-[#b9bdc9] bg-[#fdfdfd] pl-[5px] font-medium text-[#3c3c3c] italic">
          <span className="mr-[7px] border-y-[5px] border-l-[7px] border-y-transparent border-l-[#5c6068]" />
          Replay
        </button>
      </div>
    </aside>
  );
}

/* Coordinate axes, drawn around their own origin */
function Triad({ x, y, faded }: { x: number; y: number; faded?: boolean }) {
  const blue = faded ? '#4a83b8' : '#1414dc';
  const red = faded ? '#8f7a70' : '#dc0808';
  const green = faded ? '#3fb065' : '#06b406';
  return (
    <g transform={`translate(${x} ${y})`}>
      <path d="M-2 0 L-16 -34 L-11 -37 L4 -2Z" fill={blue} />
      <path d="M1 -2 L-13 -35" stroke={faded ? '#9cc4dc' : '#c9c9ff'} strokeWidth="1.500" />
      <path d="M-20 -49 L-19 -32 L-8 -37Z" fill={blue} />
      <path d="M0 0 L27 -10" stroke={green} strokeWidth="6" />
      <path d="M41 -13 L24 -17 L29 -4Z" fill={green} />
      <path d="M0 -1 L18 -14" stroke={red} strokeWidth="6" />
      <path d="M27 -22 L13 -19 L21 -9Z" fill={red} />
      <g fontSize="22" fontStyle="italic" textAnchor="middle">
        <text x="-24" y="-50" fill={faded ? '#4a83b8' : '#0000ff'}>Z</text>
        <text x="32" y="-18" fill={faded ? '#8f7a70' : '#ff0000'}>X</text>
        <text x="50" y="-7" fill={faded ? '#3fb065' : '#00e000'}>Y</text>
      </g>
    </g>
  );
}

const BODY =
  'M667 734 C690 722 722 708 746 700 L810 679 L933 637 L949 614 L960 601 L994 573 Q1008 563 1017 562 C1100 540 1180 526 1277 510 C1350 499 1430 488 1500 482 Q1580 476 1646 472 L1652 490 L1665 517 L1680 556 L1692 551 L1660 577 L1589 612 L1515 646 L1385 712 L1288 760 C1240 785 1190 816 1155 833 C1110 855 1060 873 1020 884 L910 912 L861 922 Q810 933 794 935 Q750 940 740 937 C722 932 716 915 709 900 C702 890 692 874 673 873 L706 849 Q722 835 722 803 C721 765 700 735 667 734Z';
const SPINNER = 'M589 818 C596 790 625 745 667 734 C700 735 721 765 722 803 C721 835 712 853 694 853 C655 850 622 845 589 818Z';
const SEAM =
  'M707 848 C730 846 738 862 745 877 C751 893 757 908 785 911 C830 912 870 903 897 897 C950 886 1000 875 1044 862 C1075 854 1120 842 1151 827 C1190 810 1245 780 1285 755 C1310 740 1345 720 1385 700 L1512 642 L1589 603 L1680 556';
const LOWER_EDGE =
  'M673 873 C692 874 702 890 709 900 C716 915 722 932 740 937 Q750 940 794 935 L861 922 L910 912 L1020 884 C1060 873 1110 855 1155 833 C1190 816 1240 785 1288 760 L1385 712 L1515 646 L1589 612 L1660 577 L1692 551';
const SHADE_LINE =
  'M770 890 C830 896 890 888 946 873 C1000 862 1070 842 1129 818 C1180 795 1220 768 1257 750 C1300 728 1340 708 1380 688 L1441 658 L1538 618 L1614 583 L1680 552';
const WING = 'M1426 277 L1489 423 L1058 753 C1045 700 1015 640 983 617Z';

function Aircraft() {
  return (
    <svg className="block h-full w-full" viewBox="279 234 1640 887" role="img" aria-label="P-40 fuselage surfaces">
      <defs>
        <linearGradient id="skin" gradientUnits="userSpaceOnUse" x1="1060" y1="590" x2="1150" y2="850">
          <stop offset="0" stopColor="#7ca3b7" />
          <stop offset="0.450" stopColor="#7599ac" />
          <stop offset="1" stopColor="#668796" />
        </linearGradient>
        <linearGradient id="nose" gradientUnits="userSpaceOnUse" x1="640" y1="740" x2="668" y2="852">
          <stop offset="0" stopColor="#5f8090" />
          <stop offset="0.250" stopColor="#759bae" />
          <stop offset="0.500" stopColor="#7094a5" />
          <stop offset="0.780" stopColor="#56707c" />
          <stop offset="1" stopColor="#7ea5b9" />
        </linearGradient>
        <linearGradient id="belly" gradientUnits="userSpaceOnUse" x1="700" y1="900" x2="1300" y2="760">
          <stop offset="0" stopColor="#7398aa" />
          <stop offset="0.400" stopColor="#5c7987" />
          <stop offset="1" stopColor="#4d646f" />
        </linearGradient>
        <linearGradient id="depth" gradientUnits="userSpaceOnUse" x1="950" y1="870" x2="1220" y2="770">
          <stop offset="0" stopColor="#222e34" stopOpacity="0" />
          <stop offset="1" stopColor="#222e34" />
        </linearGradient>
        <clipPath id="bodyClip"><path d={BODY} /></clipPath>
        <clipPath id="noseClip"><path d={SPINNER} /></clipPath>
        <filter id="b2" x="-50%" y="-50%" width="200%" height="200%"><feGaussianBlur stdDeviation="2.500" /></filter>
        <filter id="b4" x="-50%" y="-50%" width="200%" height="200%"><feGaussianBlur stdDeviation="4" /></filter>
        <filter id="b8" x="-50%" y="-50%" width="200%" height="200%"><feGaussianBlur stdDeviation="8" /></filter>
        <filter id="b20" x="-50%" y="-50%" width="200%" height="200%"><feGaussianBlur stdDeviation="20" /></filter>
      </defs>

      {/* reference planes on the far side */}
      <g fill="#00ff00" fillOpacity="0.1" stroke="none">
        <path d={WING} />
        <path d="M1477 426 L1435 459 L1446 487 L1515 646 L1534 686 L1576 654Z" />
        <path d="M969 579 L1012 547 L1018 562 L974 590Z" />
        <path d="M805 678 L849 645 L856 663Z" />
        <path d="M641 710 L684 677 L706 727 L655 741Z" />
        <path d="M1191 524 L1234 491 L1245 519Z" />
        <path d="M1664 515 L1685 501 L1699 535 L1681 548Z" />
        <path d="M1660 512 L1670 505 L1685 538 L1677 545Z" />
        <path d="M906 906 L959 897 L915 929Z" />
      </g>

      <path d={BODY} fill="url(#skin)" />
      <g clipPath="url(#bodyClip)">
        <path d="M667 734 C690 722 722 708 746 700 L810 679 L933 637 M1017 562 C1100 540 1180 526 1277 510 C1350 499 1430 488 1500 482 L1646 472" stroke="#4c6673" strokeWidth="7" fill="none" filter="url(#b4)" />
        <path d={SHADE_LINE} stroke="#46606c" strokeWidth="46" fill="none" opacity="0.550" filter="url(#b20)" />
        <path d={SHADE_LINE} stroke="#33444c" strokeWidth="18" fill="none" opacity="0.700" filter="url(#b8)" />
        <path d="M946 875 C1000 864 1070 844 1129 820 C1180 797 1220 770 1257 752 C1300 730 1340 710 1380 690 L1441 660 L1538 622 L1614 588" stroke="url(#depth)" strokeWidth="13" fill="none" opacity="0.850" filter="url(#b8)" />
        <path d={`${SEAM} L1692 551 L1660 577 L1589 612 L1515 646 L1385 712 L1288 760 C1240 785 1190 816 1155 833 C1110 855 1060 873 1020 884 L910 912 L861 922 L794 935 Q750 940 740 937 C722 932 716 915 709 900 C702 890 692 874 673 873Z`} fill="url(#belly)" />
        <path d="M722 770 C740 790 736 830 712 848" stroke="#5a7682" strokeWidth="14" fill="none" filter="url(#b8)" />
        <path d="M738 812 C756 812 770 838 778 890" stroke="#86adc1" strokeWidth="12" fill="none" opacity="0.800" filter="url(#b4)" />
        <path d="M742 802 C772 806 784 850 787 895" stroke="#5f7d8b" strokeWidth="6" fill="none" opacity="0.700" filter="url(#b4)" />
        <ellipse cx="742" cy="848" rx="5" ry="14" transform="rotate(22 742 848)" fill="#b9dcee" filter="url(#b2)" />
        <ellipse cx="767" cy="888" rx="4" ry="13" transform="rotate(14 767 888)" fill="#b4dede" filter="url(#b2)" />
        <path d="M706 862 L735 900 L745 935" stroke="#86adbf" strokeWidth="7" fill="none" opacity="0.600" filter="url(#b4)" />
        <path d="M1008 566 Q984 598 956 632" stroke="#3c515c" strokeWidth="12" fill="none" opacity="0.900" filter="url(#b4)" />
        <path d="M705 775 C730 766 760 760 790 757" stroke="#86aec3" strokeWidth="14" fill="none" opacity="0.500" filter="url(#b8)" />
      </g>
      <path d="M933 637 L949 614 L960 601 L994 573 L955 629Z" fill="#435c68" />
      <path d="M948 615 L984 588 M933 637 L955 629" stroke="#000" fill="none" />
      <path d="M933 637 L960 601 L994 573 L953 630" stroke="#1010e0" strokeDasharray="6 2" fill="none" />

      {/* spinner */}
      <path d={SPINNER} fill="url(#nose)" />
      <g clipPath="url(#noseClip)">
        <path d="M589 818 Q640 790 705 768" stroke="#80aabe" strokeWidth="20" fill="none" filter="url(#b8)" />
        <path d="M602 810 Q640 789 682 772" stroke="#b9e0f2" strokeWidth="10" fill="none" filter="url(#b4)" />
        <path d="M592 821 Q640 840 712 832" stroke="#4d6672" strokeWidth="8" fill="none" filter="url(#b4)" />
      </g>
      <path d="M667 734 C700 735 721 765 722 803 C721 835 712 853 694 853" stroke="#e8f2e4" strokeWidth="2" fill="none" />
      <path d="M665 735 C698 737 719 766 720 803 C719 835 711 851 686 853" stroke="#000" fill="none" />
      <path d="M667 734 C702 735 723 765 723 803 C722 835 713 846 706 850" stroke="#1010e0" strokeDasharray="6 2" fill="none" />

      {/* planes where they cross the skin */}
      <g clipPath="url(#bodyClip)">
        <path d={WING} fill="#66aa97" fillOpacity="0.820" />
        <path d="M1489 484 L1501 482 L1562 622 L1515 645 L1544 625 Q1546 585 1489 484Z" fill="#4d9080" fillOpacity="0.550" />
        <path d="M943 861 L959 897 L906 911 Q938 895 943 861Z" fill="#4f9a78" fillOpacity="0.600" />
        <path d="M751 831 L785 908 L742 941 L715 881 L734 862Z" fill="#5db893" fillOpacity="0.450" />
      </g>

      <path d={SEAM} stroke="#1515e6" strokeDasharray="10 4" fill="none" />
      <path d={LOWER_EDGE} stroke="#1515e6" strokeDasharray="7 2" fill="none" />
      <path d="M673 873 L706 849 M1646 472 L1652 490 L1665 517 L1680 556" stroke="#1515e6" strokeDasharray="7 3" fill="none" />
      <path d="M1560 477 L1646 471" stroke="#7070d8" strokeDasharray="3 5" fill="none" />
      <path d="M1646 472 L1664 470 L1652 481Z" fill="#c67bd0" />
      <path d="M1646 471 L1664 470 L1658 477" stroke="#1515e6" strokeDasharray="4 2" fill="none" />

      <Triad x={1062} y={693} faded />

      <g stroke="#1fe81f" fill="none">
        <path d="M983 617 L1426 277 L1489 423 L1058 753" />
        <path d="M1446 487 L1435 459 L1477 426 L1576 654 L1534 686 L1515 645" />
        <path d="M974 590 L969 579 L1012 547 L1018 562" />
        <path d="M805 678 L849 645 L856 663" />
        <path d="M655 741 L641 710 L684 677 L706 727" />
        <path d="M1191 524 L1234 491 L1245 519" />
        <path d="M1667 514 L1685 501 L1699 535 L1681 548" />
        <path d="M1664 510 L1670 505 L1685 538 L1677 545" />
        <path d="M943 861 L959 897 L915 929 L906 906" />
        <path d="M751 831 L785 908 L742 941 L715 881" />
        <path d="M1329 709 L1333 719 L1323 727" strokeWidth="1.500" />
      </g>

      <g stroke="#ff0000" strokeWidth="2" strokeDasharray="12 4" fill="none">
        <path d="M1056 715 L1397 403 L1405 422 L1079 764Z" />
        <path d="M1067 740 L1401 412" />
      </g>

      <Triad x={335} y={1066} />
    </svg>
  );
}

function Drop() {
  return (
    <span className="flex w-3 pl-px">
      <Caret />
    </span>
  );
}

function ViewTools() {
  const cell = 'grid w-[26px] place-items-center';
  return (
    <div className="absolute top-[3px] left-[543px] flex h-[26px] items-center">
      <button type="button" aria-label="Exit" className={cell}>
        <Svg size={17}>
          <rect x="5" y="1" width="22" height="30" fill="#17608a" />
          <circle cx="17" cy="6" r="3" fill="#fff" />
          <path d="M10 14 L16 10 L20 15 L24 14 M16 11 L15 19 L21 23 V28 M15 19 L9 27" stroke="#fff" strokeWidth="2.500" />
        </Svg>
      </button>
      <button type="button" aria-label="Erase" className={cell}><Eraser /></button>
      <button type="button" aria-label="Align plane" className={cell}>
        <Svg size={18}>
          <path d="M2 13 L16 7 L30 12 L16 19Z" fill="#f5dc2a" stroke="#9a8a14" strokeWidth="0.600" /><path d="M2 13 L16 19 V30 L2 24Z" fill="#2cb0d8" /><path d="M16 19 L30 12 V23 L16 30Z" fill="#0f7fa8" />
          <path d="M16 1 V13" stroke="#3aa02a" strokeWidth="2" />
        </Svg>
      </button>
      <button type="button" aria-label="Shaded" className={cell}><Cube top="#9adcf2" left="#6cc3e6" right="#14658f" /></button>
      <Drop />
      <button type="button" aria-label="View orientation" className={cell}>
        <Svg size={18}>
          <path d="M8 12 L18 6 L31 11 L20 17Z" fill="#39a9d0" /><path d="M8 12 L20 17 V31 L8 26Z" fill="#1b8ab5" /><path d="M20 17 L31 11 V24 L20 31Z" fill="#0e5577" />
          <rect x="1" y="3" width="12" height="13" fill="#e6f5fb" stroke="#2b87ab" strokeWidth="2" /><path d="M9 6 V13 M9 9 L4 12" stroke="#2b87ab" strokeWidth="1.500" />
        </Svg>
      </button>
      <Drop />
      <button type="button" aria-label="Section view" className={cell}>
        <Svg size={18}>
          <path d="M1 10 L15 2 L31 7 L16 14Z" fill="#f3a32a" stroke="#a86a08" strokeWidth="0.800" /><path d="M1 10 L16 14 V31 L1 24Z" fill="#48c0e2" /><path d="M16 14 L31 7 V22 L16 31Z" fill="#1580aa" />
          <path d="M1 24 L16 18 L31 22 M16 14 V31" stroke="#0b5576" />
        </Svg>
      </button>
      <Drop />
      <button type="button" aria-label="Zoom" className={cell}>
        <Svg size={18}>
          <rect x="2" y="2" width="28" height="28" fill="#9fd3ea" stroke="#3a8fb5" strokeWidth="2" />
          <circle cx="15" cy="15" r="10" fill="#f6f2e2" stroke="#e5ab1c" strokeWidth="3.500" />
          <path d="M11 9 H17 L20 12 V21 H11Z" fill="#fff" stroke="#999" /><path d="M23 23 L30 30" stroke="#c28a12" strokeWidth="3" />
        </Svg>
      </button>
      <Drop />
      <button type="button" aria-label="Fit" className={cell}>
        <Svg size={18}>
          <rect x="2" y="2" width="28" height="28" fill="#fff" stroke="#6ba9c4" strokeWidth="2" />
          <path d="M18 8 H24 V14 M8 13 Q10 9 14 8 M24 20 Q23 24 19 25" stroke="#3a9cc6" strokeWidth="1.800" /><rect x="7" y="19" width="6" height="6" fill="#17608a" />
        </Svg>
      </button>
      <button type="button" aria-label="Measure" className={cell}>
        <Svg size={18}><path d="M4 2 V22 M27 2 V22 M4 12 H27 M8 9 L4 12 L8 15 M23 9 L27 12 L23 15" stroke="#2b98c4" strokeWidth="2" /><path d="M3 29 H29" stroke="#cf1820" strokeWidth="3" /></Svg>
      </button>
      <Drop />
      <button type="button" aria-label="Display" className={cell}>
        <Svg size={18}><rect x="1" y="2" width="30" height="23" rx="2" fill="#a9acb2" /><rect x="4" y="5" width="24" height="16" fill="#69718f" /><path d="M9 28 H23 V31 H9Z" fill="#8d9096" /></Svg>
      </button>
      <Drop />
      <button type="button" aria-label="Edge colour" className={cell}><span className="h-4 w-[17px] border border-[#333] bg-black" /></button>
      <button type="button" aria-label="Face colour" className={cell}><span className="h-4 w-[17px] border border-[#2a1a1a] bg-[#93c1da]" /></button>
      <button type="button" aria-label="Layers" className={cell}>
        <Svg size={18}>
          <path d="M3 17 L16 22 L29 13 V18 L16 28 L3 22Z" fill="#2d8f96" /><path d="M3 15 L14 9 L29 12 L16 21Z" fill="#67cdb0" stroke="#2b8c84" /><path d="M1 9 L9 13" stroke="#2aa36a" strokeWidth="3" />
        </Svg>
      </button>
      <Drop />
      <div className="relative ml-px flex items-center">
        <Svg size={14} className="absolute left-1">
          <path d="M10 22 Q3 14 8 6 Q16 -1 24 6 Q29 14 22 22Z" fill="#fffbd0" stroke="#a28a20" strokeWidth="2.500" /><rect x="11" y="23" width="10" height="7" fill="#777" />
        </Svg>
        <Svg size={14} className="absolute left-[22px]">
          <path d="M0 0 H32 V32 H0Z" stroke="#d8cf50" strokeWidth="2" strokeDasharray="6 4" /><circle cx="16" cy="16" r="13" fill="#ffdf1f" stroke="#3a8fb5" strokeWidth="2.500" />
        </Svg>
        <select aria-label="Layer" className="h-[26px] w-[130px] appearance-none border border-[#b9bdc9] bg-transparent pl-[38px] text-black italic"><option>Layer0000</option></select>
        <Caret className="pointer-events-none absolute right-[5px]" />
      </div>
    </div>
  );
}

function Viewport() {
  return (
    <main className="flex min-w-0 flex-1 flex-col">
      <div className="relative z-10 -mb-px flex h-[27px] shrink-0 pl-[3px]">
        <div className="flex w-[212px] items-center border border-b-0 border-[#b9bdc9] bg-[#fdfdfd] pt-[2px]">
          <Svg size={12} className="ml-3"><path d="M16 4 V28 M4 16 H28" stroke="#7b6a3f" strokeWidth="5" /></Svg>
          <span className="ml-[5px] text-black">P40_Based-V02.Z3 - [P-40]</span>
          <button type="button" aria-label="Close tab" className="ml-[5px]">
            <Svg size={12}><path d="M5 5 L27 27 M27 5 L5 27" stroke="#7b6a3f" strokeWidth="5" /></Svg>
          </button>
        </div>
        <button type="button" aria-label="New tab" className="ml-[7px] pb-[3px]">
          <Svg size={12}><path d="M16 3 V29 M3 16 H29" stroke="#9b9794" strokeWidth="5" /></Svg>
        </button>
        <button type="button" aria-label="Tab list" className="mr-2 ml-auto pb-[2px]">
          <Svg size={10}><path d="M3 4 H29" stroke="#999" strokeWidth="6" /><path d="M3 13 H29 L16 27Z" fill="#999" /></Svg>
        </button>
      </div>
      <div className="relative min-h-0 flex-1 border border-[#b9bdc9] bg-white">
        <Aircraft />
        <ViewTools />
        <p className="absolute top-[25px] left-[15px] font-['Liberation_Sans',sans-serif] text-[13px] leading-4 text-black not-italic">
          You can set the hotkey in Customize Settings.
          <br />
          Click "Help/Show Hints" to disable these hints.
        </p>
        <p className="absolute bottom-0 left-[6px] text-xl leading-[26px] text-black">196.144 mm</p>
      </div>
    </main>
  );
}

function StatusBar() {
  return (
    <footer className="flex h-[33px] shrink-0 items-center pr-px pl-[6px] text-[#3c3c3c]">
      <span className="flex-1">Select command or entity.</span>
      <span className="h-[30px] w-[2px] border-l border-[#8a8d92] bg-white" />
      <button type="button" aria-label="Manager panel" className="ml-[6px] grid h-[22px] w-[23px] place-items-center border border-[#c79b2e] bg-[#ffe07a]">
        <Svg size={14}><rect x="1" y="2" width="30" height="28" fill="#fff" stroke="#3d6fb5" strokeWidth="3" /><path d="M1 5 H31 M11 5 V29" stroke="#3d6fb5" strokeWidth="4" /><path d="M14 13 H28" stroke="#555" strokeWidth="4" /><path d="M21 13 V27" stroke="#c03030" strokeWidth="4" /></Svg>
      </button>
      <button type="button" aria-label="Output panel" className="ml-[10px]">
        <Svg size={14}><rect x="1" y="2" width="30" height="28" fill="#f3f6fc" stroke="#3d6fb5" strokeWidth="3" /><path d="M1 5 H31" stroke="#3d6fb5" strokeWidth="5" /><path d="M5 13 H27 M5 19 H25 M5 25 H21" stroke="#77808f" strokeWidth="2.500" /></Svg>
      </button>
      <input aria-label="Command input" className="ml-[11px] h-[22px] w-[350px] border border-[#b9bdc9] bg-white px-1" />
    </footer>
  );
}

export default function App() {
  return (
    <div className="flex h-screen flex-col overflow-hidden bg-[#e1e5e8] font-['Roboto_Condensed',Roboto,sans-serif] text-[15px] leading-5 italic">
      <Defs />
      <div className="shrink-0">
        <TitleBar />
        <RibbonTabs />
        <Ribbon />
        <SelectionBar />
      </div>
      <div className="flex min-h-0 flex-1">
        <Manager />
        <Viewport />
      </div>
      <StatusBar />
    </div>
  );
}
